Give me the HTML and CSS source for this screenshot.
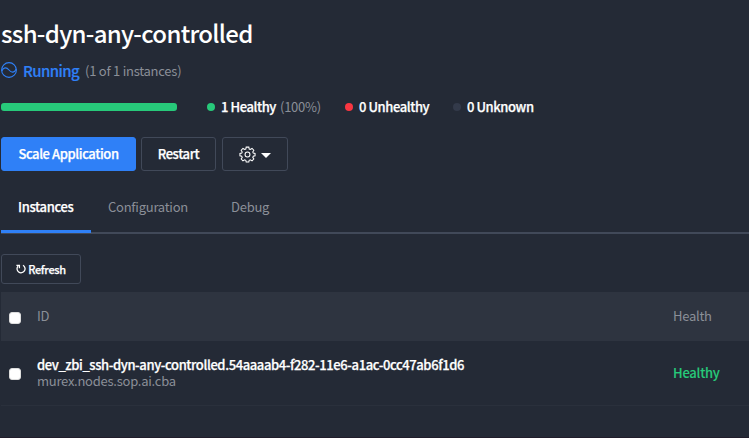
FILE: index.html
```html
<!DOCTYPE html>
<html lang="en">
<head>
<meta charset="utf-8">
<title>ssh-dyn-any-controlled</title>
<link rel="stylesheet" href="styles.css">
</head>
<body>
<header class="header">
  <h1 class="title">ssh-dyn-any-controlled</h1>
  <div class="status">
    <svg class="status-icon" viewBox="0 0 16 16"><circle cx="8" cy="8" r="7.4"/><path d="M.8 9C2.500 5.300 5.300 4.800 8 8S13.500 10.700 15.200 7"/></svg>
    <span class="status-name">Running</span>
    <span class="status-count">(1 of 1 instances)</span>
  </div>
  <div class="health">
    <div class="bar"></div>
    <div class="legend healthy"><i class="dot"></i><span class="label">1 Healthy</span><span class="percent">(100%)</span></div>
    <div class="legend unhealthy"><i class="dot"></i><span class="label">0 Unhealthy</span></div>
    <div class="legend unknown"><i class="dot"></i><span class="label">0 Unknown</span></div>
  </div>
  <div class="actions">
    <button class="button primary"><span>Scale Application</span></button>
    <button class="button restart"><span>Restart</span></button>
    <button class="button settings" aria-label="Settings">
      <svg class="gear" viewBox="0 0 18 18"><path d="M7.600 1.200h2.800l.4 2 1.200.5 1.800-1.100 1.900 1.900-1.100 1.800.5 1.200 1.900.4v2.400l-1.900.5-.5 1.200 1.100 1.800-1.900 1.900-1.800-1.100-1.200.5-.4 1.800H7.600l-.4-1.800-1.200-.5-1.800 1.100-1.900-1.900L3.400 12l-.5-1.200L1 10.300V7.900l1.900-.4.5-1.200-1.100-1.800 1.900-1.900L6 3.700l1.200-.5z"/><circle cx="9" cy="9" r="2.600"/></svg>
      <i class="caret"></i>
    </button>
  </div>
</header>
<nav class="tabs">
  <a class="tab active"><span>Instances</span></a>
  <a class="tab configuration"><span>Configuration</span></a>
  <a class="tab debug"><span>Debug</span></a>
</nav>
<main>
  <button class="button refresh">
    <svg class="refresh-icon" viewBox="0 0 10 10"><path d="M7 1.300A4 4 0 1 1 2 2.200M.4 1.300h3v3"/></svg>
    <span>Refresh</span>
  </button>
  <div class="table">
    <div class="row head"><i class="check"></i><span class="id">ID</span><span class="state">Health</span></div>
    <div class="row"><i class="check"></i><div class="id"><div class="task">dev_zbi_ssh-dyn-any-controlled.54aaaab4-f282-11e6-a1ac-0cc47ab6f1d6</div><div class="host">murex.nodes.sop.ai.cba</div></div><span class="state good">Healthy</span></div>
  </div>
</main>
</body>
</html>
```
FILE: styles.css
```css
* { box-sizing: border-box; }
body {
  margin: 0;
  height: 438px;
  overflow: hidden;
  background: #242a36;
  border-bottom: 1px solid #211d2b;
  color: #fff;
  font: 13px/20px "Noto Sans CJK SC", sans-serif;
  letter-spacing: -0.25px;
  white-space: nowrap;
}
i { display: block; flex: none; }
svg { flex: none; fill: none; }
.header { padding: 15px 0 0 1px; }
.title { margin: 0; height: 37px; font-size: 24px; line-height: 36px; font-weight: 500; letter-spacing: -0.7px; }
.status { display: flex; align-items: center; height: 24px; margin-top: 7px; }
.status-icon { width: 16px; height: 16px; margin-top: -2px; stroke: #2f80f7; stroke-width: 1.1; }
.status-name { margin-left: 6px; width: 62px; font-size: 15px; font-weight: 500; letter-spacing: -0.6px; color: #2f80f7; -webkit-text-stroke: .2px; }
.status-count { color: #8b8f98; }
.health { display: flex; align-items: center; height: 20px; margin-top: 14px; font-weight: 500; }
.bar { width: 176px; height: 8px; border-radius: 3px; background: #27c97a; }
.legend { display: flex; align-items: center; }
.healthy { margin-left: 30px; width: 138px; }
.unhealthy { width: 108px; }
.label { letter-spacing: -0.42px; margin-top: -1px; -webkit-text-stroke: .25px; }
.dot { width: 8px; height: 8px; border-radius: 50%; margin-right: 6px; background: #27c97a; }
.unhealthy .dot { background: #f93641; }
.unknown .dot { background: #333a4a; }
.percent { margin: -1px 0 0 4px; font-weight: 400; color: #8b8f98; }
.actions { display: flex; margin-top: 20px; }
.button {
  display: flex;
  align-items: center;
  justify-content: center;
  height: 34px;
  padding: 0;
  border: 1px solid #414959;
  border-radius: 3px;
  background: transparent;
  color: #fff;
  font: 500 13px/20px "Noto Sans CJK SC", sans-serif;
  letter-spacing: -0.4px;
  -webkit-text-stroke: .25px;
}
.primary { width: 135px; background: #2f80f7; border-color: #2f80f7; }
.restart { width: 75px; margin-left: 5px; }
.settings { width: 66px; margin-left: 6px; }
.gear { width: 17px; height: 17px; margin-right: -1px; stroke: #fff; stroke-width: 1.1; }
.caret { margin: 2px 0 0 6px; border: 5px solid transparent; border-top-color: #fff; border-bottom: 0; }
.tabs { display: flex; height: 63px; margin-left: 1px; border-bottom: 2px solid #414959; color: #8b8f98; }
.tab { height: 62px; padding-top: 26px; }
.active { width: 90px; padding-left: 17px; color: #fff; font-weight: 500; letter-spacing: -0.35px; border-bottom: 3px solid #2f80f7; -webkit-text-stroke: .25px; }
.configuration { width: 123px; padding-left: 17px; }
.debug { padding-left: 17px; }
.refresh { width: 80px; height: 30px; margin: 20px 0 0 1px; font-size: 11px; letter-spacing: -0.3px; }
.refresh-icon { width: 10px; height: 10px; margin-right: 2px; stroke: #fff; stroke-width: 1.3; }
.table { margin: 8px 0 0 1px; }
.row { display: flex; align-items: center; height: 65px; border-bottom: 1px solid #2a303c; }
.head { height: 49px; padding-bottom: 2px; background: #2e3440; color: #8b8f98; border: 0; }
.check { width: 12px; height: 12px; margin: 4px 16px 0 8px; border-radius: 3px; background: #fff; border: 1px solid #ddd; }
.row:not(.head) .check { margin-top: 2px; }
.id { width: 636px; }
.task { line-height: 16px; font-weight: 500; letter-spacing: -0.4px; -webkit-text-stroke: .25px; }
.host { line-height: 16px; }
.host { color: #8b8f98; }
.good { color: #27c97a; font-weight: 500; -webkit-text-stroke: .1px; }
```
